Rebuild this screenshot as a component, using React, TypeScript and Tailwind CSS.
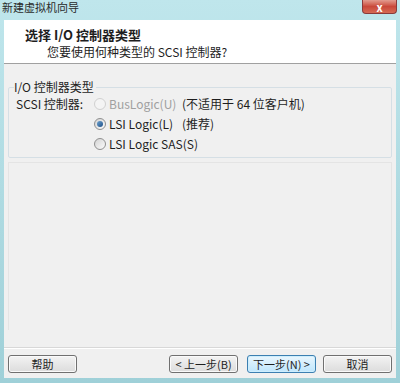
// ─── 新建虚拟机向导: 选择 I/O 控制器类型 ────────────────────────────────────
const FONT = { fontFamily: '"Noto Sans CJK SC", "Noto Sans", sans-serif' }

type Choice = { label: string; note?: string; checked?: boolean; disabled?: boolean }

const CHOICES: Choice[] = [
  { label: 'BusLogic(U)', note: '(不适用于 64 位客户机)', disabled: true },
  { label: 'LSI Logic(L)', note: '(推荐)', checked: true },
  { label: 'LSI Logic SAS(S)' },
]

export default function App() {
  return (
    <div
      className="w-[400px] h-[383px] flex flex-col bg-gradient-to-b from-[#bfe6ec] to-[#9fd0d8] px-[4px] pb-[5px] text-[#1e1e1e]"
      style={FONT}
    >
      {/* 标题栏 */}
      <div className="h-[20px] flex items-start justify-between">
        <span className="text-[11px] leading-[13px] pt-[1px] -ml-[2px] text-[#2a2a2a]">新建虚拟机向导</span>
        <div className="w-[35px] h-[14px] mr-[-1px] rounded-b-[4px] border border-t-0 border-[#8a3a3a] bg-gradient-to-b from-[#e29b8f] via-[#c9483a] to-[#d56a55] flex items-center justify-center">
          <span className="text-white text-[11px] leading-[12px] font-bold">x</span>
        </div>
      </div>

      {/* 客户区 */}
      <div className="flex-1 flex flex-col bg-[#f0f0f0]">
        {/* 页眉 */}
        <div className="h-[44px] bg-white border-b border-[#a0a0a0] pt-[7px]">
          <p className="pl-[21px] text-[13px] leading-[16px] font-bold">选择 I/O 控制器类型</p>
          <p className="pl-[43px] text-[12px] leading-[16px] mt-[1px]">您要使用何种类型的 SCSI 控制器?</p>
        </div>

        <div className="flex-1 flex flex-col px-[4px] pt-[16px] gap-[4px]">
          {/* 分组框 */}
          <fieldset className="border border-[#d5dfe5] rounded-[2px] pl-[7px] pr-[8px] h-[78px]">
            <legend className="text-[12px] leading-[14px] -ml-[2px] pr-[2px]">I/O 控制器类型</legend>
            <div className="flex text-[12px] leading-[20px] whitespace-nowrap">
              <span className="w-[78px]">SCSI 控制器:</span>
              <div className="flex flex-col">
                {CHOICES.map((c) => (
                  <div key={c.label} className="flex items-center h-[20px]">
                    <Radio checked={c.checked} disabled={c.disabled} />
                    <span className={`ml-[3px] w-[73px] ${c.disabled ? 'text-[#a0a0a0]' : ''}`}>{c.label}</span>
                    {c.note && <span>{c.note}</span>}
                  </div>
                ))}
              </div>
            </div>
          </fieldset>

          <div className="h-[168px] border border-[#e4e4e4] border-b-0" />
        </div>

        {/* 按钮区 */}
        <div className="border-t border-[#d8d8d8] shadow-[inset_0_1px_0_#ffffff] h-[31px] flex items-center px-[4px] pt-[2px]">
          <Btn label="帮助" />
          <div className="flex-1" />
          <Btn label="< 上一步(B)" />
          <Btn label="下一步(N) >" primary className="ml-[9px]" />
          <Btn label="取消" className="ml-[7px]" />
        </div>
      </div>
    </div>
  )
}

function Radio({ checked, disabled }: { checked?: boolean; disabled?: boolean }) {
  return (
    <span
      className={`w-[12px] h-[12px] rounded-full border flex items-center justify-center ${
        disabled
          ? 'border-[#d0d0d0] bg-[#f4f4f4]'
          : 'border-[#8f8f8f] bg-gradient-to-br from-[#d4d4d4] to-[#fbfbfb]'
      }`}
    >
      {checked && <span className="w-[6px] h-[6px] rounded-full bg-gradient-to-br from-[#6fa3d0] to-[#1b4f86]" />}
    </span>
  )
}

function Btn({ label, primary, className = '' }: { label: string; primary?: boolean; className?: string }) {
  return (
    <button
      className={`w-[69px] h-[18px] rounded-[3px] border text-[11px] leading-none whitespace-nowrap ${
        primary
          ? 'border-[#3c7fb1] bg-gradient-to-b from-[#eaf6fd] to-[#bee6fd] shadow-[inset_0_0_0_1px_#cdeefd]'
          : 'border-[#707070] bg-gradient-to-b from-[#f3f3f3] to-[#dcdcdc] shadow-[inset_0_0_0_1px_#fafafa]'
      } ${className}`}
    >
      {label}
    </button>
  )
}
